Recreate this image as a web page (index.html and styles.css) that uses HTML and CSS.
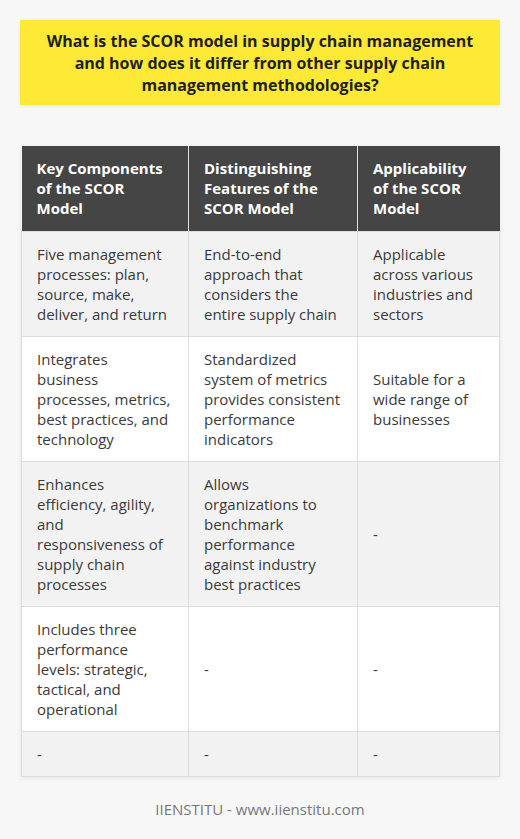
FILE: index.html
```html
<!DOCTYPE html>
<html>
<head>
<meta charset="utf-8">
<link rel="stylesheet" href="styles.css">
</head>
<body>
<div class="page">
  <h1 class="title">What is the SCOR model in supply chain management and how does it differ from other supply chain management methodologies?</h1>
  <table class="grid">
    <colgroup>
      <col class="c1"><col class="c2"><col class="c3">
    </colgroup>
    <thead>
      <tr>
        <th>Key Components of the SCOR Model</th>
        <th>Distinguishing Features of the SCOR Model</th>
        <th>Applicability of the SCOR Model</th>
      </tr>
    </thead>
    <tbody>
      <tr>
        <td>Five management processes: plan, source, make, deliver, and return</td>
        <td>End-to-end approach that considers the entire supply chain</td>
        <td>Applicable across various industries and sectors</td>
      </tr>
      <tr>
        <td>Integrates business processes, metrics, best practices, and technology</td>
        <td>Standardized system of metrics provides consistent performance indicators</td>
        <td>Suitable for a wide range of businesses</td>
      </tr>
      <tr>
        <td>Enhances efficiency, agility, and responsiveness of supply chain processes</td>
        <td>Allows organizations to benchmark performance against industry best practices</td>
        <td>-</td>
      </tr>
      <tr>
        <td>Includes three performance levels: strategic, tactical, and operational</td>
        <td>-</td>
        <td>-</td>
      </tr>
      <tr>
        <td>-</td>
        <td>-</td>
        <td>-</td>
      </tr>
    </tbody>
  </table>
  <p class="footer">IIENSTITU - www.iienstitu.com</p>
</div>
</body>
</html>
```

FILE: styles.css
```css
html, body {
  margin: 0;
  padding: 0;
  background: #f7f7f7;
}
body {
  font-family: "Open Sans", "Liberation Sans", sans-serif;
  color: #333;
}
.page {
  padding: 20px 20px 0 20px;
}
.title {
  margin: 0;
  background: #fde936;
  color: #1f1f1f;
  font-size: 16px;
  font-weight: 700;
  line-height: 22px;
  text-align: center;
  padding: 10px 12px 9px;
  box-shadow: 0 1px 3px rgba(0,0,0,0.08);
}
.grid {
  margin: 41px 0 0 1px;
  width: 478px;
  border-collapse: collapse;
  table-layout: fixed;
  box-shadow: 0 1px 4px rgba(0,0,0,0.08);
}
.c1 { width: 167px; }
.c2 { width: 169px; }
.c3 { width: 142px; }
.grid th {
  background: #454545;
  color: #fff;
  font-weight: 700;
  font-size: 15px;
  line-height: 20px;
  text-align: left;
  padding: 12px 15px 13px;
  border-left: 1px solid #e0e0e0;
}
.grid th:first-child { border-left: none; }
.grid td {
  font-size: 15px;
  line-height: 20px;
  padding: 12px 15px 12px;
  border: 1px solid #dddddd;
  vertical-align: middle;
  color: #3a3a3a;
}
.grid td:first-child { padding-right: 16px; }
.grid tbody tr:nth-child(odd) td { background: #f2f2f2; }
.grid tbody tr:nth-child(even) td { background: #ffffff; }
.footer {
  margin: 22px 0 0;
  text-align: center;
  font-size: 15px;
  color: #777;
}
```
